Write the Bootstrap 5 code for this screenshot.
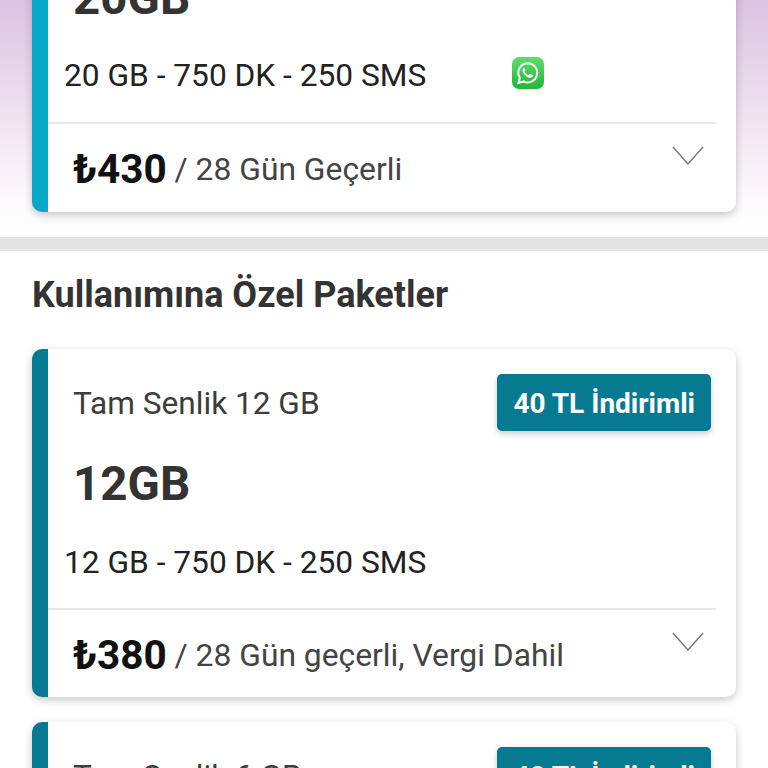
<!DOCTYPE html>
<html lang="tr">
<head>
  <meta charset="UTF-8" />
  <meta name="viewport" content="width=device-width, initial-scale=1.0"/>
  <title>Paketler</title>
  <link href="https://cdn.jsdelivr.net/npm/bootstrap@5.3.3/dist/css/bootstrap.min.css" rel="stylesheet">
  <style>
    html, body {
      height: 768px;
      overflow: hidden;
    }
    body {
      background: #fff;
      font-family: Roboto, "Liberation Sans", sans-serif;
      color: #333;
    }
    .top-area {
      display: flow-root;
      height: 237px;
      padding: 0 32px;
      background: linear-gradient(180deg, #dcc3e2 0%, #e6d3ea 60px, #f4e9f4 140px, #fdfbfd 205px, #fff 237px);
    }
    .gray-band {
      height: 14px;
      background: #e4e4e4;
    }
    .list-area {
      padding: 0 32px;
    }
    .list-title {
      font-size: 36px;
      font-weight: 700;
      line-height: 40px;
      margin: 24px 0 34px;
      color: #333;
    }
    .pkg-card {
      height: 348px;
      background: #fff;
      border-left: 16px solid #067a91;
      border-radius: 10px;
      box-shadow: 0 3px 8px rgba(0, 0, 0, .22);
      margin-bottom: 25px;
    }
    .pkg-first {
      margin-top: -136px;
      border-left-color: #06a9c7;
    }
    .pkg-top {
      height: 259px;
      padding-top: 25px;
    }
    .pkg-first .pkg-top {
      height: 258px;
      padding-top: 24px;
    }
    .pkg-name {
      padding-left: 25px;
      padding-right: 25px;
      height: 57px;
    }
    .pkg-name span:first-child {
      font-size: 31.600px;
      padding-top: 2px;
      color: #3c3c3c;
    }
    .pkg-tag {
      height: 57px;
      padding: 0 16px;
      background: #067a91;
      color: #fff;
      font-size: 28px;
      font-weight: 700;
      line-height: 60px;
      border-radius: 5px;
      box-shadow: 0 3px 6px rgba(0, 0, 0, .2);
    }
    .pkg-size {
      font-size: 47.500px;
      font-weight: 700;
      line-height: 54px;
      margin: 26px 0 0 25px;
      color: #333;
    }
    .pkg-spec {
      height: 48px;
      margin-top: 28px;
      padding-left: 16px;
      font-size: 31.700px;
      line-height: 48px;
      color: #222;
    }
    .pkg-first .pkg-spec {
      margin-top: 27px;
    }
    .wa-icon {
      width: 32px;
      height: 32px;
      margin-left: 86px;
      margin-top: -7px;
    }
    .pkg-foot {
      height: 89px;
      margin-right: 20px;
      border-top: 2px solid #e6e6e6;
    }
    .pkg-first .pkg-foot {
      height: 90px;
    }
    .pkg-price {
      padding: 21px 0 0 25px;
      font-size: 31.800px;
      line-height: 48px;
      color: #444;
    }
    .pkg-price b {
      font-size: 40.500px;
      font-weight: 700;
      color: #111;
    }
    .price-note {
      vertical-align: 3px;
    }
    .chev {
      width: 32px;
      height: 21px;
      margin: 21px 12px 0 0;
    }
  </style>
</head>
<body>
  <div class="top-area">
    <div class="pkg-card pkg-first d-flex flex-column">
      <div class="pkg-top">
        <div class="pkg-name"></div>
        <div class="pkg-size">20GB</div>
        <div class="pkg-spec d-flex align-items-center">
          <span>20 GB - 750 DK - 250 SMS</span>
          <svg class="wa-icon" viewBox="0 0 32 32">
            <defs>
              <linearGradient id="waGrad" x1="0" y1="0" x2="0" y2="1">
                <stop offset="0" stop-color="#5fdc6e"/>
                <stop offset="1" stop-color="#22b538"/>
              </linearGradient>
            </defs>
            <rect width="32" height="32" rx="7" fill="url(#waGrad)"/>
            <path d="M16 6.2a9.6 9.6 0 0 0-8.2 14.6L6.5 25.800l5.100-1.300A9.600 9.600 0 1 0 16 6.200z" fill="none" stroke="#fff" stroke-width="2"/>
            <path d="M12.600 10.800c-.4 0-1 .2-1.400.8-.6.8-.8 1.800-.4 3 .6 1.800 2 3.600 3.600 4.800 1.400 1 3 1.600 4.200 1.400 1.200-.2 2-1 2.200-1.800.1-.5.1-.9 0-1l-2.600-1.300c-.2-.1-.4 0-.5.100l-1 1.200c-.2.200-.3.200-.6.100-1.600-.7-2.800-1.900-3.500-3.300-.1-.2-.1-.4.100-.5l.7-.9c.1-.2.1-.3 0-.5l-1.100-2.500c-.1-.2-.3-.3-.7-.3z" fill="#fff"/>
          </svg>
        </div>
      </div>
      <div class="pkg-foot d-flex justify-content-between">
        <div class="pkg-price"><b>₺430</b> <span class="price-note">/ 28 Gün Geçerli</span></div>
        <svg class="chev" viewBox="0 0 34 22"><path d="M1 2l16 18L33 2" fill="none" stroke="#777" stroke-width="1.500"/></svg>
      </div>
    </div>
  </div>
  <div class="gray-band"></div>
  <div class="list-area">
    <h2 class="list-title">Kullanımına Özel Paketler</h2>

    <div class="pkg-card d-flex flex-column">
      <div class="pkg-top">
        <div class="pkg-name d-flex justify-content-between align-items-center">
          <span>Tam Senlik 12 GB</span>
          <span class="pkg-tag">40 TL İndirimli</span>
        </div>
        <div class="pkg-size">12GB</div>
        <div class="pkg-spec d-flex align-items-center"><span>12 GB - 750 DK - 250 SMS</span></div>
      </div>
      <div class="pkg-foot d-flex justify-content-between">
        <div class="pkg-price"><b>₺380</b> <span class="price-note">/ 28 Gün geçerli, Vergi Dahil</span></div>
        <svg class="chev" viewBox="0 0 34 22"><path d="M1 2l16 18L33 2" fill="none" stroke="#777" stroke-width="1.500"/></svg>
      </div>
    </div>

    <div class="pkg-card d-flex flex-column">
      <div class="pkg-top">
        <div class="pkg-name d-flex justify-content-between align-items-center">
          <span>Tam Senlik 6 GB</span>
          <span class="pkg-tag">40 TL İndirimli</span>
        </div>
      </div>
    </div>
  </div>
</body>
</html>
